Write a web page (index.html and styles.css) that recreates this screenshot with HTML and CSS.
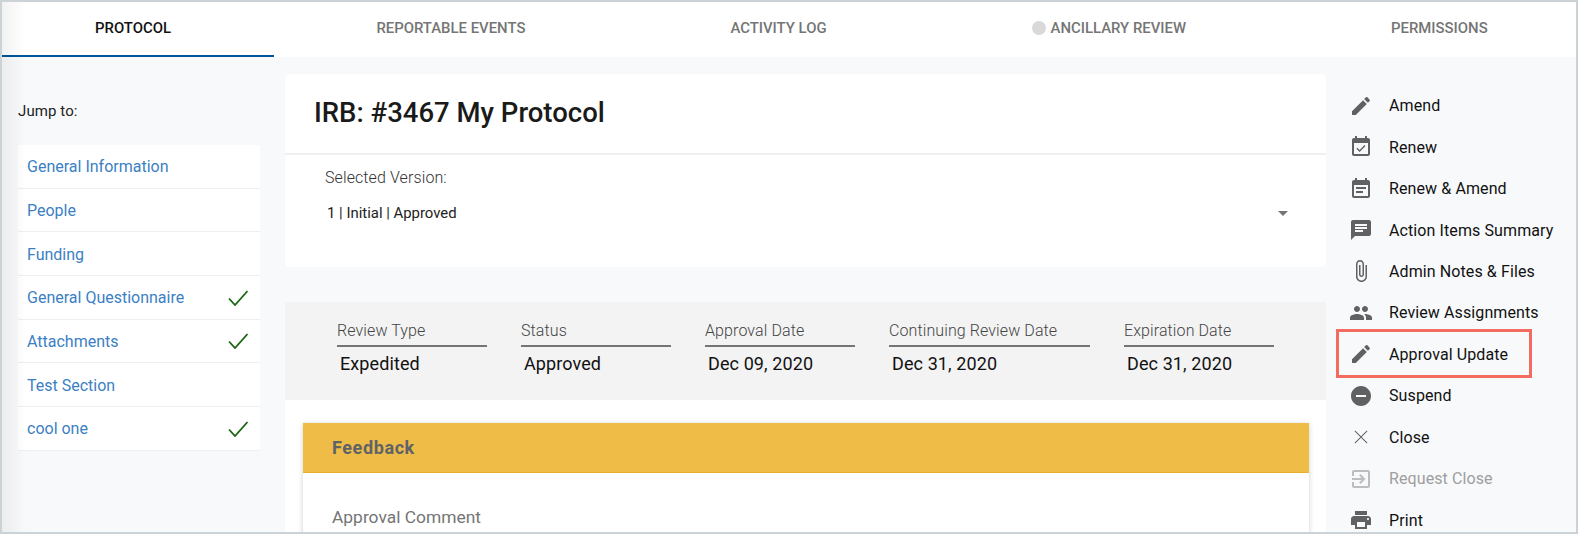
FILE: index.html
```html
<!DOCTYPE html>
<html lang="en">
<head>
<meta charset="utf-8">
<title>IRB Protocol</title>
<link rel="stylesheet" href="styles.css">
</head>
<body>
<div class="frame">
  <nav class="tabs">
    <div class="tab tab-active">Protocol</div>
    <div class="tab">Reportable Events</div>
    <div class="tab">Activity Log</div>
    <div class="tab"><span class="dot"></span>Ancillary Review</div>
    <div class="tab">Permissions</div>
  </nav>
  <div class="content">
    <aside class="left">
      <div class="jump">Jump to:</div>
      <ul class="jump-list">
        <li class="jump-row"><a class="jump-link">General Information</a></li>
        <li class="jump-row"><a class="jump-link">People</a></li>
        <li class="jump-row"><a class="jump-link">Funding</a></li>
        <li class="jump-row"><a class="jump-link">General Questionnaire</a><svg class="check" viewBox="0 0 20 16"><path d="M1 8.5 L7 15 L19.500 1"/></svg></li>
        <li class="jump-row"><a class="jump-link">Attachments</a><svg class="check" viewBox="0 0 20 16"><path d="M1 8.5 L7 15 L19.500 1"/></svg></li>
        <li class="jump-row"><a class="jump-link">Test Section</a></li>
        <li class="jump-row"><a class="jump-link">cool one</a><svg class="check" viewBox="0 0 20 16"><path d="M1 8.5 L7 15 L19.500 1"/></svg></li>
      </ul>
    </aside>
    <main class="main">
      <section class="card">
        <h1 class="title">IRB: #3467 My Protocol</h1>
        <div class="version">
          <div class="version-label">Selected Version:</div>
          <div class="version-select"><span>1 | Initial | Approved</span><span class="caret"></span></div>
        </div>
      </section>
      <section class="meta">
        <div class="meta-col"><div class="meta-label">Review Type</div><div class="meta-value">Expedited</div></div>
        <div class="meta-col"><div class="meta-label">Status</div><div class="meta-value">Approved</div></div>
        <div class="meta-col"><div class="meta-label">Approval Date</div><div class="meta-value">Dec 09, 2020</div></div>
        <div class="meta-col meta-wide"><div class="meta-label">Continuing Review Date</div><div class="meta-value">Dec 31, 2020</div></div>
        <div class="meta-col"><div class="meta-label">Expiration Date</div><div class="meta-value">Dec 31, 2020</div></div>
      </section>
      <section class="panel">
        <div class="feedback">
          <div class="feedback-head">Feedback</div>
          <div class="feedback-body">Approval Comment</div>
        </div>
      </section>
    </main>
    <aside class="actions">
      <div class="action"><svg class="icon" viewBox="0 0 24 24"><path d="M3 17.25V21h3.750L17.810 9.940l-3.750-3.750L3 17.250zM20.710 7.040c.39-.39.39-1.020 0-1.410l-2.340-2.340c-.39-.39-1.020-.39-1.410 0l-1.830 1.830 3.750 3.750 1.830-1.830z"/></svg>Amend</div>
      <div class="action"><svg class="icon" viewBox="0 0 24 24"><path d="M16.530 11.060L15.470 10l-4.880 4.880-2.120-2.120-1.060 1.060L10.590 17l5.940-5.940zM19 3h-1V1h-2v2H8V1H6v2H5c-1.110 0-1.990.9-1.990 2L3 19c0 1.100.89 2 2 2h14c1.100 0 2-.9 2-2V5c0-1.100-.9-2-2-2zm0 16H5V8h14v11z"/></svg>Renew</div>
      <div class="action"><svg class="icon" viewBox="0 0 24 24"><path d="M17 10H7v2h10v-2zm2-7h-1V1h-2v2H8V1H6v2H5c-1.110 0-1.990.9-1.990 2L3 19c0 1.100.89 2 2 2h14c1.100 0 2-.9 2-2V5c0-1.100-.9-2-2-2zm0 16H5V8h14v11zm-5-5H7v2h7v-2z"/></svg>Renew &amp; Amend</div>
      <div class="action"><svg class="icon" viewBox="0 0 24 24"><path d="M20 2H4c-1.100 0-1.990.9-1.990 2L2 22l4-4h14c1.100 0 2-.9 2-2V4c0-1.100-.9-2-2-2zM6 9h12v2H6V9zm8 5H6v-2h8v2zm4-6H6V6h12v2z"/></svg>Action Items Summary</div>
      <div class="action"><svg class="icon" viewBox="0 0 24 24"><path d="M16.500 6v11.500c0 2.210-1.790 4-4 4s-4-1.790-4-4V5c0-1.380 1.120-2.500 2.500-2.500s2.500 1.120 2.500 2.500v10.500c0 .55-.45 1-1 1s-1-.45-1-1V6H10v9.500c0 1.380 1.120 2.500 2.500 2.500s2.500-1.120 2.500-2.500V5c0-2.210-1.790-4-4-4S7 2.790 7 5v12.500c0 3.040 2.460 5.500 5.500 5.500s5.500-2.460 5.500-5.500V6h-1.500z"/></svg>Admin Notes &amp; Files</div>
      <div class="action"><svg class="icon" viewBox="0 0 24 24"><path d="M16 11c1.660 0 2.990-1.340 2.990-3S17.660 5 16 5c-1.660 0-3 1.340-3 3s1.340 3 3 3zm-8 0c1.660 0 2.990-1.340 2.990-3S9.660 5 8 5C6.340 5 5 6.340 5 8s1.340 3 3 3zm0 2c-2.330 0-7 1.170-7 3.500V19h14v-2.500c0-2.330-4.670-3.500-7-3.500zm8 0c-.29 0-.62.02-.97.05 1.160.84 1.970 1.970 1.970 3.450V19h6v-2.500c0-2.330-4.670-3.500-7-3.500z"/></svg>Review Assignments</div>
      <div class="action action-marked"><svg class="icon" viewBox="0 0 24 24"><path d="M3 17.250V21h3.750L17.810 9.940l-3.750-3.750L3 17.250zM20.710 7.040c.39-.39.39-1.020 0-1.410l-2.340-2.340c-.39-.39-1.020-.39-1.410 0l-1.830 1.830 3.750 3.750 1.830-1.830z"/></svg>Approval Update</div>
      <div class="action"><svg class="icon" viewBox="0 0 24 24"><path d="M12 2C6.480 2 2 6.480 2 12s4.480 10 10 10 10-4.480 10-10S17.520 2 12 2zm5 11H7v-2h10v2z"/></svg>Suspend</div>
      <div class="action"><svg class="icon" viewBox="0 0 24 24"><path d="M18.500 6.200L17.800 5.500 12 11.300 6.200 5.500 5.500 6.200 11.300 12 5.500 17.800 6.200 18.500 12 12.700 17.800 18.500 18.500 17.800 12.700 12z"/></svg>Close</div>
      <div class="action action-disabled"><svg class="icon" viewBox="0 0 24 24"><path d="M10.090 15.590L11.500 17l5-5-5-5-1.410 1.410L12.670 11H3v2h9.670l-2.580 2.590zM19 3H5c-1.110 0-2 .9-2 2v4h2V5h14v14H5v-4H3v4c0 1.100.89 2 2 2h14c1.100 0 2-.9 2-2V5c0-1.100-.9-2-2-2z"/></svg>Request Close</div>
      <div class="action"><svg class="icon" viewBox="0 0 24 24"><path d="M19 8H5c-1.660 0-3 1.340-3 3v6h4v4h12v-4h4v-6c0-1.660-1.340-3-3-3zm-3 11H8v-5h8v5zm3-7c-.55 0-1-.45-1-1s.45-1 1-1 1 .45 1 1-.45 1-1 1zm-1-9H6v4h12V3z"/></svg>Print</div>
    </aside>
  </div>
</div>
</body>
</html>
```
FILE: styles.css
```css
* { box-sizing: border-box; }
html, body { margin: 0; padding: 0; height: 100%; }
body { font-family: Roboto, "Liberation Sans", sans-serif; background: #fff; overflow: hidden; }
.frame { width: 1578px; height: 534px; border: 2px solid #ccd3d6; display: flex; flex-direction: column; overflow: hidden; background: #f8f9fb; position: relative; }
.frame::before { content: ""; position: absolute; left: 0; top: 0; bottom: 0; width: 24px; background: linear-gradient(to right, rgba(0,0,0,.05), rgba(0,0,0,0)); pointer-events: none; z-index: 2; }
.tabs { display: flex; height: 55px; flex: none; background: #fff; }
.tab { padding: 0 102.500px; display: flex; align-items: center; font-size: 14.900px; font-weight: 500; text-transform: uppercase; color: #757575; white-space: nowrap; padding-bottom: 3px; }
.tab-active { color: #111; border-bottom: 2px solid #00549a; padding: 0 103px 1px 93px; }
.dot { width: 14px; height: 14px; border-radius: 50%; background: #d9d9d9; margin-right: 5px; }
.content { display: flex; flex: 1; min-height: 0; }
.left { width: 283px; flex: none; padding: 44px 25px 0 16px; }
.jump { font-size: 15px; font-weight: 400; letter-spacing: .1px; color: #222; line-height: 20px; margin-bottom: 24px; }
.jump-list { list-style: none; margin: 0; padding: 0; width: 242px; }
.jump-row { height: 43.670px; background: #fff; border-bottom: 1px solid #eeeff1; display: flex; align-items: center; justify-content: space-between; padding: 1px 12px 0 9px; }
.jump-link { font-size: 16px; color: #3b7fc4; }
.check { width: 20px; height: 16px; fill: none; stroke: #1b6610; stroke-width: 1.800; }
.main { width: 1041px; flex: none; padding-top: 17px; }
.card { height: 193px; background: #fff; border-radius: 5px; margin-bottom: 35px; }
.title { margin: 0; height: 81px; padding: 0 29px 2px; display: flex; align-items: center; font-size: 27.500px; font-weight: 500; color: #1a1a1a; border-bottom: 2px solid #f0f0f0; }
.version { padding: 13px 38px 0 40px; }
.version-label { font-size: 16px; font-weight: 300; letter-spacing: .1px; color: #333; line-height: 20px; }
.version-select { display: flex; justify-content: space-between; align-items: center; font-size: 14.900px; color: #222; padding: 15px 0 0 2px; line-height: 20px; }
.caret { width: 0; height: 0; border-left: 5px solid transparent; border-right: 5px solid transparent; border-top: 5px solid #757575; }
.meta { height: 98px; background: #f3f3f3; display: flex; gap: 34px; padding: 18px 0 0 52px; }
.meta-col { width: 150px; }
.meta-wide { width: 201px; }
.meta-label { font-size: 16px; font-weight: 300; letter-spacing: .1px; color: #444; line-height: 20px; padding: 1px 0 4px; border-bottom: 2px solid #757575; white-space: nowrap; }
.meta-value { font-size: 18px; letter-spacing: .1px; color: #111; line-height: 24px; padding: 5px 0 0 3px; white-space: nowrap; }
.panel { background: #fff; padding: 23px 17px 0 18px; height: 160px; }
.feedback { background: #fff; box-shadow: 0 1px 5px rgba(0,0,0,.2); height: 160px; }
.feedback-head { height: 50px; background: #efbc47; border-bottom: 1px solid #e8b02c; padding: 0 29px; display: flex; align-items: center; font-size: 18px; font-weight: 700; letter-spacing: .6px; color: #5f6368; }
.feedback-body { padding: 32px 29px 0; font-size: 17.400px; color: #757575; line-height: 24px; }
.actions { flex: 1; padding: 28px 0 0 23px; min-width: 0; }
.action { height: 41.450px; display: flex; align-items: center; font-size: 16px; letter-spacing: .1px; color: #111; white-space: nowrap; position: relative; }
.icon { width: 24px; height: 24px; fill: #616161; margin-right: 16px; flex: none; }
.action-disabled { color: #9e9e9e; }
.action-disabled .icon { fill: #bdbdbd; }
.action-marked::after { content: ""; position: absolute; left: -13px; top: -5px; width: 190px; height: 43px; border: 3px solid #f26d5f; pointer-events: none; }
```
